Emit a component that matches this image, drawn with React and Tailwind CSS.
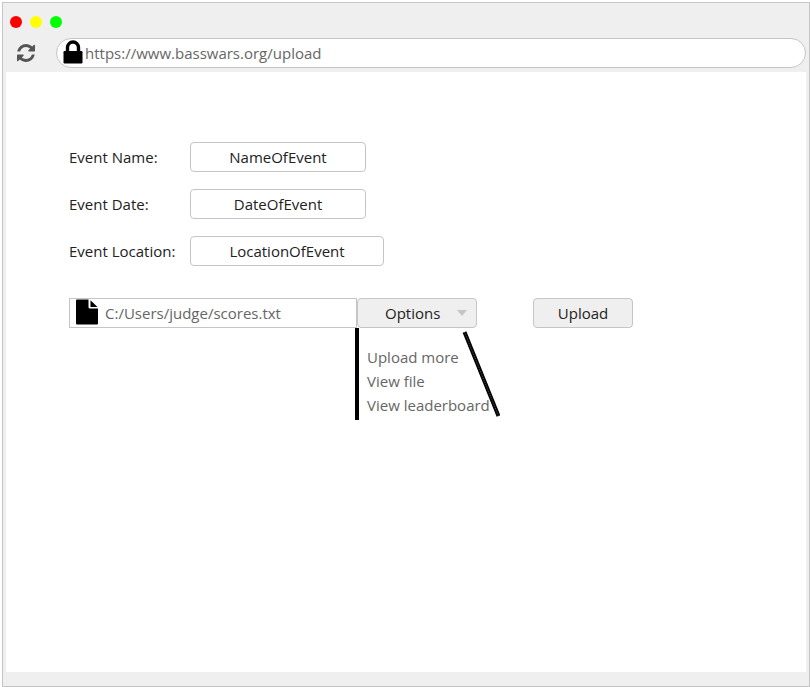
import { useState } from "react";

const fields = [
  { id: "event-name", label: "Event Name:", value: "NameOfEvent", width: "w-44" },
  { id: "event-date", label: "Event Date:", value: "DateOfEvent", width: "w-44" },
  { id: "event-location", label: "Event Location:", value: "LocationOfEvent", width: "w-[194px]" },
];

const menuItems = ["Upload more", "View file", "View leaderboard"];

function RefreshIcon() {
  return (
    <svg viewBox="0 0 1536 1536" className="size-[18px]" fill="#555" aria-hidden="true">
      <path d="M1511 928q0 5-1 7-64 268-268 434.500T764 1536q-146 0-282.500-55T238 1324l-129 129q-19 19-45 19t-45-19-19-45V960q0-26 19-45t45-19h448q26 0 45 19t19 45-19 45l-137 137q71 66 161 102t187 36q134 0 250-65t186-179q11-17 53-117 8-23 30-23h192q13 0 22.500 9.500t9.500 22.500zM1536 128v448q0 26-19 45t-45 19h-448q-26 0-45-19t-19-45 19-45l138-138Q969 256 768 256q-134 0-250 65T332 500q-11 17-53 117-8 23-30 23H50q-13 0-22.500-9.500T18 608v-7q65-268 270-434.500T768 0q146 0 284 55.500T1297 212l130-129q19-19 45-19t45 19 19 45z" />
    </svg>
  );
}

function LockIcon() {
  return (
    <svg viewBox="0 0 20 24" className="-mt-[2px] h-6 w-5 shrink-0" aria-hidden="true">
      <path d="M4.500 12V7.500a5.500 5.500 0 0 1 11 0V12" fill="none" stroke="#000" strokeWidth="3.400" />
      <rect x="0.500" y="11" width="19" height="12.500" rx="1.200" />
    </svg>
  );
}

function FileIcon() {
  return (
    <svg viewBox="0 0 22 26" className="-mt-[2px] h-[26px] w-[22px] shrink-0" aria-hidden="true">
      <path d="M1 0.500H12.500V8a1.500 1.500 0 0 0 1.500 1.500H22V24.500a1 1 0 0 1-1 1H1a1 1 0 0 1-1-1V1.500a1 1 0 0 1 1-1z" />
      <path d="M14.500 1.200 21.500 8H14.500z" />
    </svg>
  );
}

export default function App() {
  const [open, setOpen] = useState(true);

  return (
    <div className="flex min-h-screen flex-col bg-white pt-[2px] pl-[2px] font-['Open_Sans','Noto_Sans',sans-serif] text-[15px] leading-6 font-normal text-[#222]">
      <div className="flex flex-1 flex-col border border-[#c5c5c5] bg-[#efefef] px-[3px] pb-[14px]">
        <header className="pt-[13px] pb-1">
          <div className="flex gap-2 pl-1" aria-hidden="true">
            <span className="size-3 rounded-full bg-[#f00]" />
            <span className="size-3 rounded-full bg-[#ff0]" />
            <span className="size-3 rounded-full bg-[#0f0]" />
          </div>
          <div className="mt-[10px] flex items-center">
            <button type="button" aria-label="Reload" className="flex w-[50px] pl-[11px]">
              <RefreshIcon />
            </button>
            <div className="flex h-[30px] flex-1 items-center gap-[2px] rounded-full border border-[#c5c5c5] bg-white pl-[6px]">
              <LockIcon />
              <input
                type="url"
                aria-label="Address"
                defaultValue="https://www.basswars.org/upload"
                className="min-w-0 flex-1 bg-transparent pr-4 text-[#666] outline-none"
              />
            </div>
          </div>
        </header>

        <main className="flex-1 bg-white px-[63px] pt-[70px]">
          <form onSubmit={(e) => e.preventDefault()}>
            <div className="flex flex-col gap-[17px]">
              {fields.map((f) => (
                <div key={f.id} className="flex items-center">
                  <label htmlFor={f.id} className="w-[121px]">
                    {f.label}
                  </label>
                  <input
                    id={f.id}
                    type="text"
                    defaultValue={f.value}
                    className={`${f.width} h-[30px] rounded border border-[#c5c5c5] bg-white text-center`}
                  />
                </div>
              ))}
            </div>

            <div className="mt-8 flex items-center">
              <div className="flex h-[30px] w-72 items-center gap-[7px] border border-[#c5c5c5] bg-white pl-[6px]">
                <FileIcon />
                <input
                  type="text"
                  aria-label="File path"
                  defaultValue="C:/Users/judge/scores.txt"
                  className="min-w-0 flex-1 bg-transparent text-[#666] outline-none"
                />
              </div>
              <div className="relative">
                <button
                  type="button"
                  aria-haspopup="menu"
                  aria-expanded={open}
                  onClick={() => setOpen(!open)}
                  className="flex h-[30px] w-[120px] items-center justify-between rounded border border-[#c5c5c5] bg-[#efefef] pr-[9px] pl-[27px]"
                >
                  Options
                  <svg viewBox="0 0 10 6" className="h-[6px] w-[10px]" fill="#c5c5c5" aria-hidden="true">
                    <path d="M0 0H10L5 6z" />
                  </svg>
                </button>
                {open && (
                  <div className="absolute top-full -left-[2px] w-[145px] border-l-4 border-black pt-[17px] pb-[3px] pl-2">
                    <ul role="menu" aria-label="Options">
                      {menuItems.map((item) => (
                        <li key={item} role="none">
                          <button type="button" role="menuitem" className="block leading-6 whitespace-nowrap text-[#666]">
                            {item}
                          </button>
                        </li>
                      ))}
                    </ul>
                    <svg
                      viewBox="0 0 40 90"
                      className="pointer-events-none absolute top-0 right-0 h-[90px] w-10"
                      aria-hidden="true"
                    >
                      <path d="M4.500 4 38.500 88" stroke="#000" strokeWidth="4" />
                      <path d="M4.500 4 38.500 88" stroke="#555" strokeWidth="1" strokeDasharray="1 1" />
                    </svg>
                  </div>
                )}
              </div>
              <button
                type="submit"
                className="ml-14 h-[30px] w-[100px] rounded border border-[#c5c5c5] bg-[#efefef] text-center"
              >
                Upload
              </button>
            </div>
          </form>
        </main>
      </div>
    </div>
  );
}
